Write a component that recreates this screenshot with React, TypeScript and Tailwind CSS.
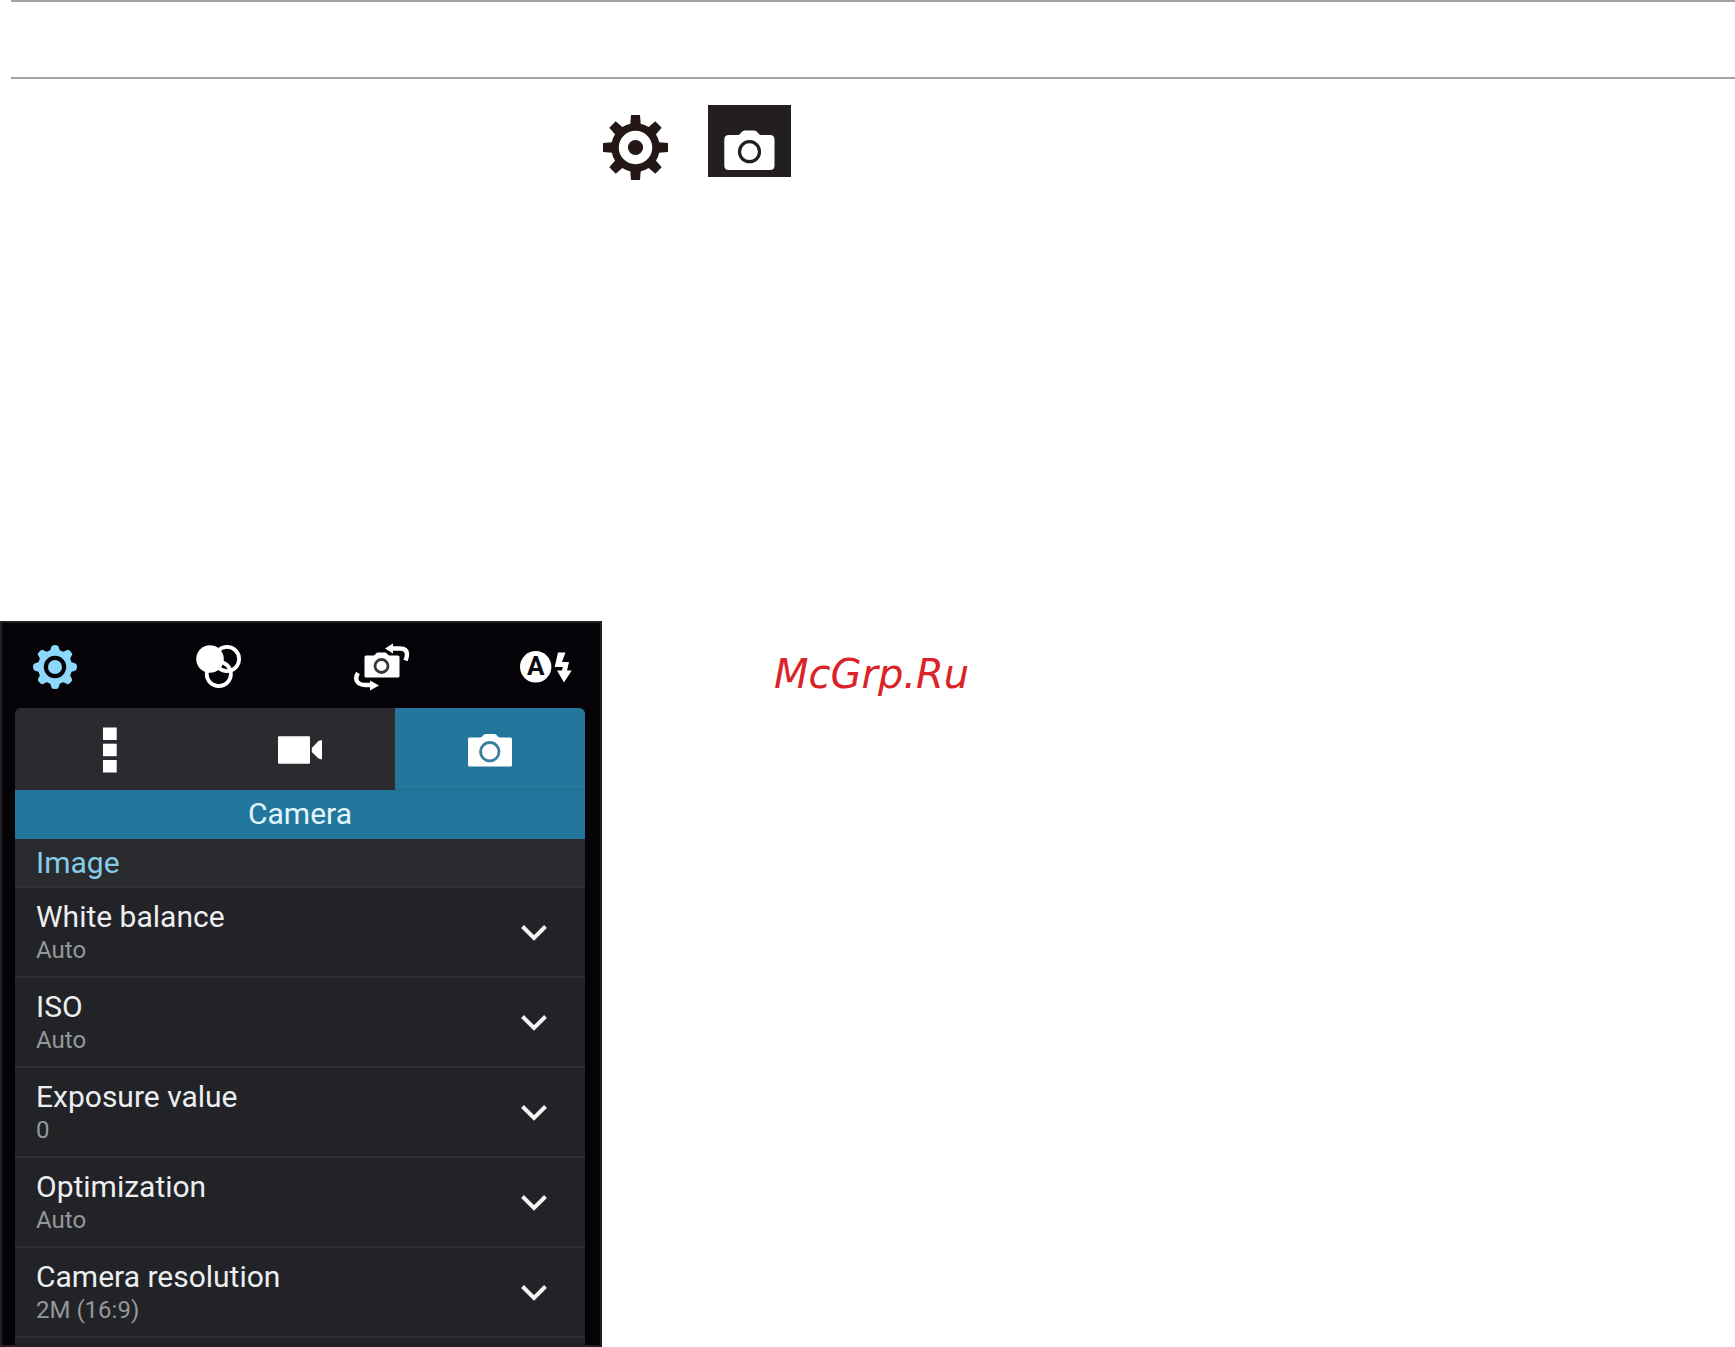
import type { ReactNode } from "react";

const settings = [
  { label: "White balance", value: "Auto" },
  { label: "ISO", value: "Auto" },
  { label: "Exposure value", value: "0" },
  { label: "Optimization", value: "Auto" },
  { label: "Camera resolution", value: "2M (16:9)" },
];

const teeth = [0, 45, 90, 135, 180, 225, 270, 315];

function PrintedGear() {
  return (
    <svg width="65" height="65" viewBox="-32.5 -32.5 65 65" fill="#231815" role="img" aria-label="Settings">
      {teeth.map((angle) => (
        <path key={angle} d="M-4.5 -32.5H4.5L5.5 -20H-5.5Z" transform={`rotate(${angle})`} />
      ))}
      <circle r="20.5" fill="none" stroke="#231815" strokeWidth="7.5" />
      <circle r="7.6" />
    </svg>
  );
}

function PrintedCamera() {
  return (
    <svg width="83" height="75" viewBox="0 0 83 75" role="img" aria-label="Camera">
      <rect width="83" height="72" fill="#231f20" />
      <path
        d="M21 30H30C33 30 33 25.5 37 25.5H46C50 25.5 50 30 53 30H62Q66.5 30 66.5 34.5V60.5Q66.5 65 62 65H21Q16.3 65 16.3 60.5V34.5Q16.3 30 21 30Z"
        fill="#fff"
      />
      <circle cx="41.5" cy="46.7" r="10" fill="none" stroke="#231f20" strokeWidth="3.2" />
    </svg>
  );
}

function GearIcon() {
  return (
    <svg width="46" height="46" viewBox="-23 -23 46 46" fill="#8ed8fc" aria-hidden="true">
      {teeth.map((angle) => (
        <path
          key={angle}
          d="M-3.5 -20.5Q-3.2 -22 0 -22Q3.2 -22 3.5 -20.5L6 -13H-6Z"
          transform={`rotate(${angle})`}
        />
      ))}
      <circle r="14.2" fill="none" stroke="#8ed8fc" strokeWidth="6" />
      <circle r="7" />
    </svg>
  );
}

function EffectsIcon() {
  return (
    <svg width="46" height="44" viewBox="0 0 46 44" fill="none" aria-hidden="true">
      <g stroke="#fff" strokeWidth="3.8">
        <circle cx="31" cy="14" r="12.1" />
        <circle cx="22.8" cy="29" r="12.1" />
      </g>
      <circle cx="14" cy="14" r="13.8" fill="#fff" />
    </svg>
  );
}

function SwitchCameraIcon() {
  return (
    <svg width="56" height="48" viewBox="0 0 56 48" fill="none" aria-hidden="true">
      <path
        d="M12 12.5H19.5C21.5 12.5 21.5 9.5 24 9.5H31C33.5 9.5 33.5 12.5 35.5 12.5H44Q45.5 12.5 45.5 14V33Q45.5 34.5 44 34.5H12Q10.5 34.5 10.5 33V14Q10.5 12.5 12 12.5Z"
        fill="#fff"
      />
      <circle cx="27.5" cy="23" r="6.5" stroke="#3a383c" strokeWidth="2.8" />
      <path d="M38 5.5H46C51.5 5.5 53 8 53 11.5C53 14 52.5 15 51.5 17.5" stroke="#fff" strokeWidth="4.4" />
      <path d="M31 5.5L39 0.5V10.5Z" fill="#fff" />
      <path d="M4 30C1.5 34 2 37 3.5 39C5.5 41.5 8 42 11 42H17" stroke="#fff" strokeWidth="4.4" />
      <path d="M25 42.5L16 37.5V47.5Z" fill="#fff" />
    </svg>
  );
}

function AutoFlashIcon() {
  return (
    <svg width="52" height="32" viewBox="0 0 52 32" fill="#fff" aria-hidden="true">
      <circle cx="15.7" cy="15.8" r="15.7" />
      <text
        x="15.7"
        y="24"
        textAnchor="middle"
        fill="#0a070c"
        className="font-['Roboto',sans-serif] text-[26px] font-bold"
      >
        A
      </text>
      <path d="M38 1.5H45.5L42 11H49L47 19.5H51.7L44 31.5L37 19.5H42L42.8 16H34.7Z" />
    </svg>
  );
}

function MoreIcon() {
  return (
    <svg width="14" height="46" viewBox="0 0 14 46" fill="#fff" aria-hidden="true">
      <rect y="0.5" width="13.7" height="12.5" />
      <rect y="16.7" width="13.7" height="12.5" />
      <rect y="33" width="13.7" height="12.5" />
    </svg>
  );
}

function VideoIcon() {
  return (
    <svg width="46" height="28" viewBox="0 0 46 28" fill="#fff" aria-hidden="true">
      <rect x="1" y="0.3" width="32" height="27.5" rx="1" />
      <path d="M45 4V23.5L41.5 22.5L34.8 16V12L41.5 5Z" />
    </svg>
  );
}

function CameraIcon() {
  return (
    <svg width="46" height="34" viewBox="0 0 46 34" aria-hidden="true">
      <path
        d="M2.5 4.5H13C15.5 4.5 16 1 19 1H27C30 1 30.5 4.5 33 4.5H43.5Q45 4.5 45 6V32Q45 33.5 43.5 33.5H2.5Q1 33.5 1 32V6Q1 4.5 2.5 4.5Z"
        fill="#fff"
      />
      <circle cx="22.8" cy="18.7" r="9.2" fill="none" stroke="#3b7f9f" strokeWidth="2.8" />
    </svg>
  );
}

function Chevron() {
  return (
    <svg width="28" height="18" viewBox="0 0 28 18" fill="none" aria-hidden="true">
      <path d="M2.5 3.5L14 15L25.5 3.5" stroke="#f4f4f5" strokeWidth="4" />
    </svg>
  );
}

function ToolButton({ label, children }: { label: string; children: ReactNode }) {
  return (
    <button type="button" aria-label={label} className="flex h-14 w-15 items-center justify-center">
      {children}
    </button>
  );
}

function Tab({ label, active = false, children }: { label: string; active?: boolean; children: ReactNode }) {
  return (
    <button
      type="button"
      role="tab"
      aria-label={label}
      aria-selected={active}
      className={`flex flex-1 items-center justify-center pt-[19px] pb-[17px] ${
        active ? "border-b border-[#1f6b8e] bg-[#23779d]" : "bg-[#2b2a2e]"
      }`}
    >
      {children}
    </button>
  );
}

function CameraSettings() {
  return (
    <section className="w-[602px] shrink-0 border-2 border-[#231f20] bg-[#060308] font-['Roboto',sans-serif]">
      {/* Viewfinder toolbar */}
      <div className="flex justify-between pt-4 pr-6 pb-[13px] pl-[23px]">
        <ToolButton label="Settings">
          <GearIcon />
        </ToolButton>
        <ToolButton label="Effects">
          <EffectsIcon />
        </ToolButton>
        <ToolButton label="Switch camera">
          <SwitchCameraIcon />
        </ToolButton>
        <ToolButton label="Auto flash">
          <AutoFlashIcon />
        </ToolButton>
      </div>

      <div className="mr-[15px] ml-[13px] overflow-hidden rounded-t-md bg-[#212327]">
        <div role="tablist" className="flex">
          <Tab label="Other">
            <MoreIcon />
          </Tab>
          <Tab label="Video">
            <VideoIcon />
          </Tab>
          <Tab label="Camera" active>
            <CameraIcon />
          </Tab>
        </div>

        <h1 className="bg-[#23779d] pt-1.5 pb-[7px] text-center text-[30px] leading-9 text-[#e2f5fc]">Camera</h1>
        <h2 className="border-b-2 border-[#303338] bg-[#292b2f] px-[21px] pt-1.5 pb-[5px] text-[30px] leading-9 text-[#86cbe9]">
          Image
        </h2>

        <ul>
          {settings.map((item) => (
            <li key={item.label} className="border-b-2 border-[#2d3034]">
              <button
                type="button"
                className="flex w-full items-center justify-between py-[11px] pr-[37px] pl-[21px] text-left"
              >
                <span>
                  <span className="block text-[30px] leading-9 text-[#eceef0]">{item.label}</span>
                  <span className="block text-2xl leading-[30px] text-[#95979a]">{item.value}</span>
                </span>
                <Chevron />
              </button>
            </li>
          ))}
        </ul>
        <div className="h-[7px]" />
      </div>
    </section>
  );
}

export default function App() {
  return (
    <main className="overflow-x-hidden bg-white">
      <header className="ml-[11px] h-[79px] border-y-2 border-[#a3a3a3]" />

      <div className="flex items-end gap-10 pt-[26px] pl-[603px]">
        <PrintedGear />
        <PrintedCamera />
      </div>

      <div className="mt-[441px] flex items-start">
        <CameraSettings />
        <p className="mt-7 ml-[172px] font-['DejaVu_Sans',sans-serif] text-[40px] leading-[50px] text-[#da2328] italic">
          McGrp.Ru
        </p>
      </div>
    </main>
  );
}
